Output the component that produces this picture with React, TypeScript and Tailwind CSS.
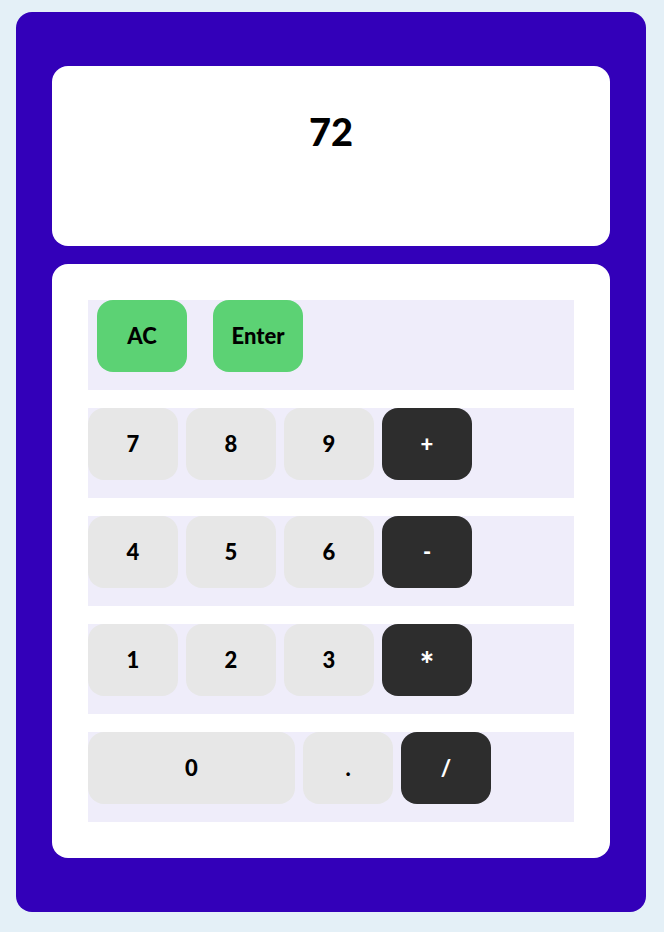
import React from "react";

const font = { fontFamily: '"Lato", "DejaVu Sans", sans-serif' };

function Key({ label, kind = "num", wide = false, big = false }: { label: string; kind?: "num" | "op" | "act"; wide?: boolean; big?: boolean }) {
  const color =
    kind === "op"
      ? "bg-[#2d2d2d] text-white"
      : kind === "act"
      ? "bg-[#5cd274] text-black"
      : "bg-[#e7e7e7] text-black";
  return (
    <button
      className={`${color} ${wide ? "w-[207px]" : "w-[90px]"} ${big ? "text-[34px] pt-[8px]" : "text-[22px]"} h-[72px] rounded-[16px] flex items-center justify-center font-black leading-none`}
    >
      {label}
    </button>
  );
}

export default function App() {
  return (
    <div className="min-h-[932px] w-full bg-[#e4f0f7] pt-[12px] pl-[16px] pr-[18px] pb-[20px]" style={font}>
      <div className="bg-[#3300b9] rounded-[16px] px-[36px] pt-[54px] pb-[54px] flex flex-col gap-[18px]">
        <div className="bg-white rounded-[16px] h-[180px] flex justify-center pt-[46px]">
          <span className="text-[38px] font-black leading-none text-black">72</span>
        </div>
        <div className="bg-white rounded-[16px] p-[36px] flex flex-col gap-[18px]">
          <div className="h-[90px] bg-[#efedfa] flex items-start pl-[9px] gap-[26px]">
            <Key label="AC" kind="act" />
            <Key label="Enter" kind="act" />
          </div>
          <div className="h-[90px] bg-[#efedfa] flex items-start gap-[8px]">
            <Key label="7" />
            <Key label="8" />
            <Key label="9" />
            <Key label="+" kind="op" />
          </div>
          <div className="h-[90px] bg-[#efedfa] flex items-start gap-[8px]">
            <Key label="4" />
            <Key label="5" />
            <Key label="6" />
            <Key label="-" kind="op" />
          </div>
          <div className="h-[90px] bg-[#efedfa] flex items-start gap-[8px]">
            <Key label="1" />
            <Key label="2" />
            <Key label="3" />
            <Key label="*" kind="op" big />
          </div>
          <div className="h-[90px] bg-[#efedfa] flex items-start gap-[8px]">
            <Key label="0" wide />
            <Key label="." />
            <Key label="/" kind="op" />
          </div>
        </div>
      </div>
    </div>
  );
}
